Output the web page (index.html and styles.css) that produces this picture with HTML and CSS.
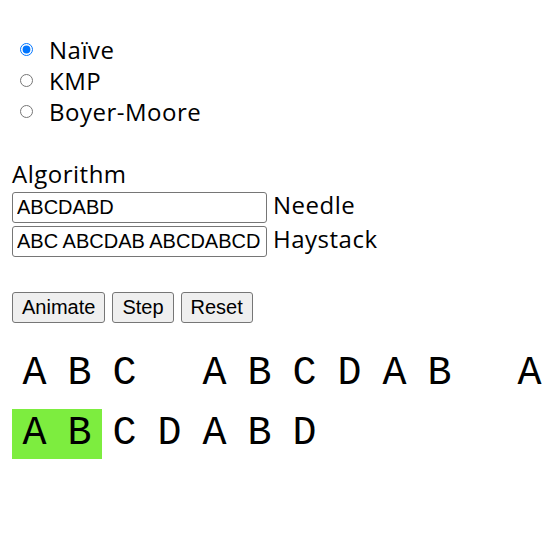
FILE: index.html
```html
<!DOCTYPE html>
<html lang="en">
<head>
  <meta charset="UTF-8">
  <title>String Search</title>
  <link rel="stylesheet" href="styles.css">
</head>
<body>

  <div class="algos">
    <label class="opt"><input type="radio" name="algo" value="naive" checked> Naïve</label>
    <label class="opt"><input type="radio" name="algo" value="kmp"> KMP</label>
    <label class="opt"><input type="radio" name="algo" value="bm"> Boyer-Moore</label>
  </div>

  <div class="fields">
    <div class="caption">Algorithm</div>
    <div class="field">
      <input type="text" id="needle" value="ABCDABD">
      <span>Needle</span>
    </div>
    <div class="field">
      <input type="text" id="haystack" value="ABC ABCDAB ABCDABCD">
      <span>Haystack</span>
    </div>
  </div>

  <div class="controls">
    <button>Animate</button>
    <button>Step</button>
    <button>Reset</button>
  </div>

  <!-- haystack row, clipped at the window edge -->
  <div class="track">
    <span class="ch">A</span><span class="ch">B</span><span class="ch">C</span><span class="ch"></span>
    <span class="ch">A</span><span class="ch">B</span><span class="ch">C</span><span class="ch">D</span>
    <span class="ch">A</span><span class="ch">B</span><span class="ch"></span>
    <span class="ch">A</span>
  </div>

  <!-- needle row -->
  <div class="track">
    <span class="ch match">A</span><span class="ch match">B</span><span class="ch">C</span><span class="ch">D</span>
    <span class="ch">A</span><span class="ch">B</span><span class="ch">D</span>
  </div>

</body>
</html>
```

FILE: styles.css
```css
body {
  margin: 0;
  padding: 0 12px;
  background: #fff;
  color: #000;
  font-family: 'Open Sans', 'Segoe UI', sans-serif;
  font-size: 24px;
  letter-spacing: 0.5px;
  line-height: 31px;
  overflow: hidden;
}

.algos {
  padding-top: 34px;
}

.opt {
  display: flex;
  align-items: center;
  height: 31px;
}

.opt input {
  width: 13px;
  height: 13px;
  margin: 0 16px 0 8px;
}

.fields {
  margin-top: 31px;
}

.field {
  display: flex;
  align-items: baseline;
  gap: 6px;
}

.field input {
  width: 255px;
  box-sizing: border-box;
  padding: 3px 4px;
  border: 1px solid #767676;
  border-radius: 3px;
  font-family: 'Liberation Sans', Arial, sans-serif;
  font-size: 20px;
  letter-spacing: 0;
  line-height: 23px;
  color: #000;
}

.controls {
  display: flex;
  gap: 7px;
  margin-top: 35px;
}

.controls button {
  padding: 3px 9px;
  border: 1px solid #767676;
  border-radius: 3px;
  background: #efefef;
  font-family: 'Liberation Sans', Arial, sans-serif;
  font-size: 20px;
  letter-spacing: 0;
  line-height: 23px;
  color: #000;
}

.track {
  display: flex;
  white-space: nowrap;
  margin-top: 26px;
  margin-right: -12px;
  overflow: hidden;
}

.track + .track {
  margin-top: 10px;
}

.ch {
  flex: none;
  width: 45px;
  height: 50px;
  line-height: 50px;
  text-align: center;
  font-family: 'Courier New', 'Nimbus Mono PS', 'Nimbus Mono L', FreeMono, 'Liberation Mono', monospace;
  font-size: 40px;
  letter-spacing: 0;
}

.match {
  background: #7ded3f;
}
```
